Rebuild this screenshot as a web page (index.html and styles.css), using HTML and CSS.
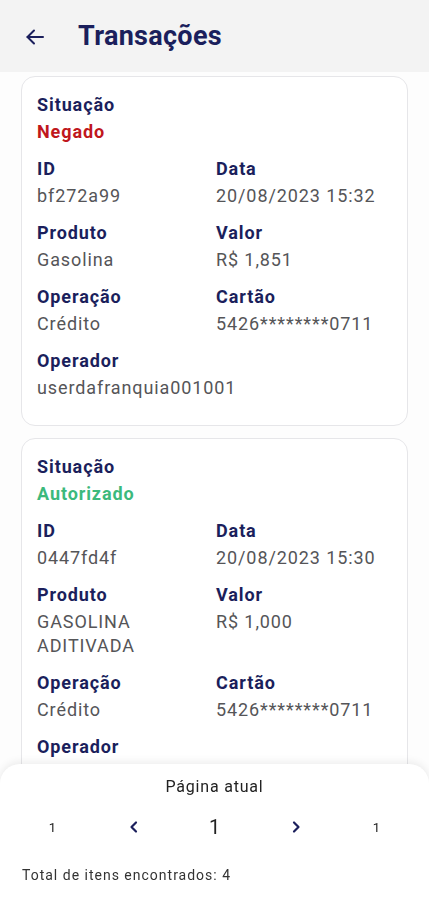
FILE: index.html
```html
<!DOCTYPE html>
<html lang="pt-BR">
<head>
    <meta charset="UTF-8">
    <meta name="viewport" content="width=device-width, initial-scale=1.0">
    <title>Transações</title>
    <link rel="stylesheet" href="styles.css">
</head>
<body>
    <header class="top-bar">
        <button class="back-btn" aria-label="Voltar">
            <svg width="20" height="20" viewBox="0 0 20 20" fill="none" stroke="#1b1f5c" stroke-width="2" stroke-linecap="round" stroke-linejoin="round">
                <path d="M18 10H2.5"/>
                <path d="M9 3.5L2.5 10L9 16.5"/>
            </svg>
        </button>
        <h1>Transações</h1>
    </header>

    <main class="list">
        <div class="card">
            <div class="field">
                <span class="label">Situação</span>
                <span class="status denied">Negado</span>
            </div>
            <div class="row">
                <div class="field">
                    <span class="label">ID</span>
                    <span class="value">bf272a99</span>
                </div>
                <div class="field">
                    <span class="label">Data</span>
                    <span class="value">20/08/2023 15:32</span>
                </div>
            </div>
            <div class="row">
                <div class="field">
                    <span class="label">Produto</span>
                    <span class="value">Gasolina</span>
                </div>
                <div class="field">
                    <span class="label">Valor</span>
                    <span class="value">R$ 1,851</span>
                </div>
            </div>
            <div class="row">
                <div class="field">
                    <span class="label">Operação</span>
                    <span class="value">Crédito</span>
                </div>
                <div class="field">
                    <span class="label">Cartão</span>
                    <span class="value">5426********0711</span>
                </div>
            </div>
            <div class="field">
                <span class="label">Operador</span>
                <span class="value">userdafranquia001001</span>
            </div>
        </div>

        <div class="card">
            <div class="field">
                <span class="label">Situação</span>
                <span class="status approved">Autorizado</span>
            </div>
            <div class="row">
                <div class="field">
                    <span class="label">ID</span>
                    <span class="value">0447fd4f</span>
                </div>
                <div class="field">
                    <span class="label">Data</span>
                    <span class="value">20/08/2023 15:30</span>
                </div>
            </div>
            <div class="row">
                <div class="field">
                    <span class="label">Produto</span>
                    <span class="value">GASOLINA ADITIVADA</span>
                </div>
                <div class="field">
                    <span class="label">Valor</span>
                    <span class="value">R$ 1,000</span>
                </div>
            </div>
            <div class="row">
                <div class="field">
                    <span class="label">Operação</span>
                    <span class="value">Crédito</span>
                </div>
                <div class="field">
                    <span class="label">Cartão</span>
                    <span class="value">5426********0711</span>
                </div>
            </div>
            <div class="field">
                <span class="label">Operador</span>
            </div>
        </div>
    </main>

    <footer class="pager">
        <div class="pager-title">Página atual</div>
        <div class="pager-row">
            <span class="page-num">1</span>
            <button class="page-arrow" aria-label="Anterior">
                <svg width="12" height="14" viewBox="0 0 12 14" fill="none" stroke="#1b1f5c" stroke-width="2.2" stroke-linecap="round" stroke-linejoin="round">
                    <path d="M8 2.5L3.5 7L8 11.5"/>
                </svg>
            </button>
            <span class="page-current">1</span>
            <button class="page-arrow" aria-label="Próxima">
                <svg width="12" height="14" viewBox="0 0 12 14" fill="none" stroke="#1b1f5c" stroke-width="2.2" stroke-linecap="round" stroke-linejoin="round">
                    <path d="M4 2.5L8.5 7L4 11.5"/>
                </svg>
            </button>
            <span class="page-num">1</span>
        </div>
        <div class="pager-total">Total de itens encontrados: 4</div>
    </footer>
</body>
</html>
```

FILE: styles.css
```css
* {
    box-sizing: border-box;
}

body {
    margin: 0;
    height: 100vh;
    display: flex;
    flex-direction: column;
    overflow: hidden;
    background-color: #fdfdfd;
    font-family: Roboto, "Liberation Sans", sans-serif;
}

.top-bar {
    height: 72px;
    flex-shrink: 0;
    display: flex;
    align-items: center;
    padding-left: 25px;
    background-color: #f3f3f3;
}

.back-btn {
    display: flex;
    padding: 0;
    border: none;
    background: none;
    margin-top: 2px;
}

.top-bar h1 {
    margin: 0 0 0 33px;
    font-size: 27px;
    font-weight: 700;
    letter-spacing: 0.3px;
    color: #1b1f5c;
}

.list {
    flex: 1;
    overflow-y: auto;
    scrollbar-width: none;
    padding: 4px 21px 140px;
}

.card {
    display: flex;
    flex-direction: column;
    gap: 13px;
    padding: 16px 15px 25px;
    margin-bottom: 12px;
    background: white;
    border: 1px solid #e6e6e9;
    border-radius: 14px;
}

.row {
    display: grid;
    grid-template-columns: 179px 1fr;
}

.field {
    display: flex;
    flex-direction: column;
    gap: 3px;
}

.label,
.value,
.status {
    font-size: 18px;
    line-height: 24px;
    letter-spacing: 0.9px;
}

.label {
    font-weight: 700;
    color: #1b1f5c;
}

.value {
    color: #555558;
    padding-right: 10px;
}

.status {
    font-weight: 700;
}

.denied {
    color: #c0171c;
}

.approved {
    color: #3cb97c;
}

.pager {
    position: fixed;
    left: 0;
    right: 0;
    bottom: 0;
    height: 136px;
    padding: 13px 12px 0;
    background: white;
    border-radius: 20px 20px 0 0;
    box-shadow: 0 -2px 8px rgba(0,0,0,0.08);
}

.pager-title {
    text-align: center;
    font-size: 16px;
    line-height: 20px;
    letter-spacing: 0.8px;
    color: #222;
}

.pager-row {
    display: grid;
    grid-template-columns: repeat(5, 1fr);
    align-items: center;
    justify-items: center;
    height: 40px;
    margin-top: 10px;
}

.page-num {
    font-size: 13px;
    color: #222;
}

.page-current {
    font-size: 20px;
    color: #222;
}

.page-arrow {
    display: flex;
    padding: 0;
    border: none;
    background: none;
}

.pager-total {
    margin: 20px 0 0 10px;
    font-size: 14px;
    letter-spacing: 1px;
    color: #333;
}
```
